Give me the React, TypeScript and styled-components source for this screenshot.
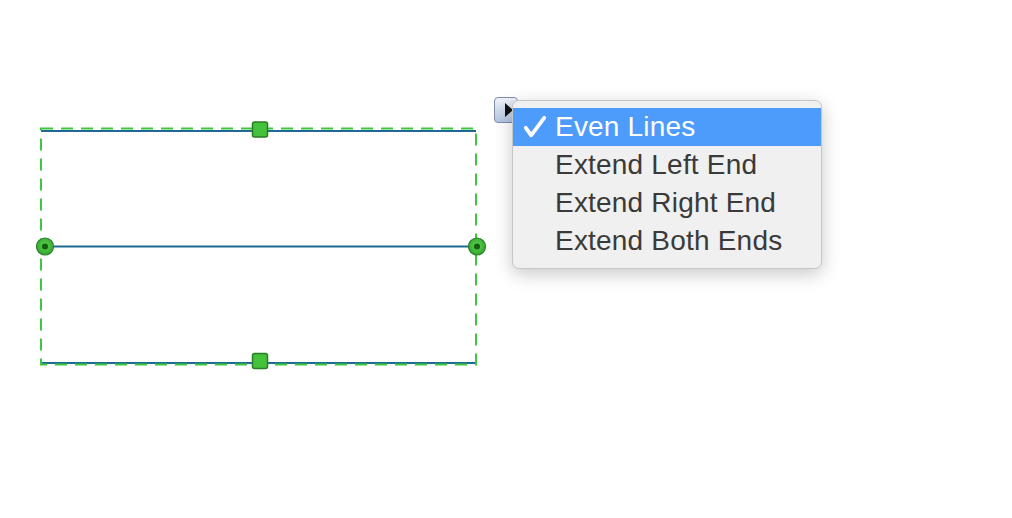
import React from 'react';
import styled, { createGlobalStyle } from 'styled-components';

const GlobalStyle = createGlobalStyle`
  html, body {
    margin: 0;
    padding: 0;
    background: #ffffff;
    font-family: "Liberation Sans", Arial, sans-serif;
  }
`;

const Canvas = styled.div`
  position: relative;
  width: 1012px;
  height: 518px;
  background: #ffffff;
  overflow: hidden;
`;

const Drawing = styled.svg`
  position: absolute;
  left: 0;
  top: 0;
`;

const MenuButton = styled.div`
  position: absolute;
  left: 494px;
  top: 97px;
  width: 24px;
  height: 26px;
  box-sizing: border-box;
  border: 1.5px solid #7d8cb0;
  border-radius: 4px;
  background: linear-gradient(#eef2fa, #b4c4e0);
  display: flex;
  align-items: center;
  padding-left: 10px;
`;

const Triangle = styled.span`
  width: 0;
  height: 0;
  border-top: 7px solid transparent;
  border-bottom: 7px solid transparent;
  border-left: 8px solid #111;
`;

const Menu = styled.ul`
  position: absolute;
  left: 512px;
  top: 100px;
  width: 310px;
  margin: 0;
  padding: 7px 0 8px;
  box-sizing: border-box;
  list-style: none;
  background: #f0f0f0;
  border: 1px solid #c6c6c6;
  border-radius: 7px;
  box-shadow: 0 5px 18px rgba(0, 0, 0, 0.22);
`;

const Item = styled.li<{ $active?: boolean }>`
  height: 38px;
  display: flex;
  align-items: center;
  font-size: 28px;
  letter-spacing: 0.2px;
  color: ${({ $active }) => ($active ? '#ffffff' : '#3a3a3a')};
  background: ${({ $active }) => ($active ? '#4d9bfb' : 'transparent')};
`;

const CheckSlot = styled.span`
  width: 42px;
  height: 38px;
  flex: none;
  display: flex;
  align-items: center;
  justify-content: flex-start;
  padding-left: 10px;
  box-sizing: border-box;
`;

const items = ['Even Lines', 'Extend Left End', 'Extend Right End', 'Extend Both Ends'];

function CheckMark() {
  return (
    <svg width={24} height={24} viewBox="0 0 24 24">
      <path d="M2.8 12.8 L8.2 20.3 L21.2 2.8" fill="none" stroke="#ffffff" strokeWidth={3.8} strokeLinecap="round" strokeLinejoin="round" />
    </svg>
  );
}

function Handle({ cx, cy }: { cx: number; cy: number }) {
  return (
    <rect x={cx - 7.5} y={cy - 7.5} width={15} height={15} rx={2} fill="#44c23c" stroke="#277f25" strokeWidth={1.5} />
  );
}

function Knob({ cx, cy }: { cx: number; cy: number }) {
  return (
    <g>
      <circle cx={cx} cy={cy} r={8.5} fill="url(#knob)" stroke="#2a8427" strokeWidth={1.2} />
      <circle cx={cx} cy={cy} r={3} fill="#145e0e" />
    </g>
  );
}

export default function App() {
  return (
    <>
      <GlobalStyle />
      <Canvas>
        <Drawing width={520} height={420}>
          <defs>
            <radialGradient id="knob" cx="50%" cy="45%" r="60%">
              <stop offset="0%" stopColor="#5fd650" />
              <stop offset="100%" stopColor="#30a02b" />
            </radialGradient>
          </defs>
          <line x1={41} y1={131} x2={476} y2={131} stroke="#1d6a93" strokeWidth={2} />
          <line x1={41} y1={246.5} x2={476} y2={246.5} stroke="#1d6a93" strokeWidth={2} />
          <line x1={41} y1={363} x2={476} y2={363} stroke="#1d6a93" strokeWidth={2} />
          <rect
            x={41}
            y={128.5}
            width={435}
            height={236}
            fill="none"
            stroke="#3fc63f"
            strokeWidth={2}
            strokeDasharray="12 8"
          />
          <Handle cx={260} cy={129.5} />
          <Handle cx={260} cy={361} />
          <Knob cx={45} cy={246.5} />
          <Knob cx={477} cy={246.5} />
        </Drawing>
        <MenuButton>
          <Triangle />
        </MenuButton>
        <Menu>
          {items.map((label, i) => (
            <Item key={label} $active={i === 0}>
              <CheckSlot>{i === 0 && <CheckMark />}</CheckSlot>
              {label}
            </Item>
          ))}
        </Menu>
      </Canvas>
    </>
  );
}
